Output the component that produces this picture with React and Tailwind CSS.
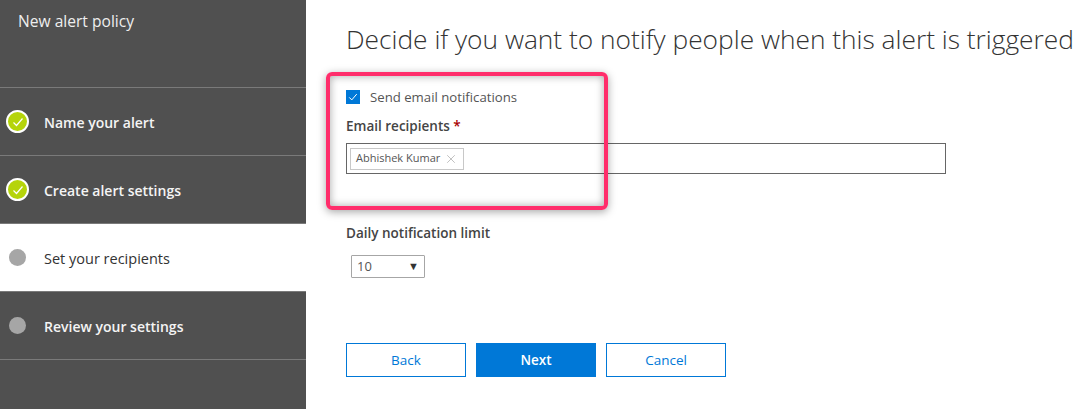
import { X } from 'lucide-react'

const pasos = [
  { nome: 'Name your alert', estado: 'feito' },
  { nome: 'Create alert settings', estado: 'feito' },
  { nome: 'Set your recipients', estado: 'atual' },
  { nome: 'Review your settings', estado: 'pendente' },
]

function Visto({ size = 10, className = '' }) {
  return (
    <svg width={size} height={size} viewBox="0 0 12 12" fill="none" className={className}>
      <path d="M1.5 6.5 L4.5 9.5 L10.5 2.5" stroke="currentColor" strokeWidth="1.2" />
    </svg>
  )
}

function Passo({ nome, estado }) {
  const atual = estado === 'atual'
  return (
    <div className={`flex h-[68px] items-center border-b border-[#7a7a7a] ${atual ? 'bg-white' : ''}`}>
      <div className="flex w-[44px] shrink-0 justify-center pr-[9px]">
        {estado === 'feito' ? (
          <div className="flex h-[23px] w-[23px] items-center justify-center rounded-full border-2 border-white bg-[#b5d40a] text-white">
            <Visto size={12} />
          </div>
        ) : (
          <div className="h-[17px] w-[17px] rounded-full bg-[#a6a6a6]" />
        )}
      </div>
      <span className={`pt-[2px] ${atual ? 'text-[14.5px] text-[#333333]' : 'text-[14px] font-semibold text-[#f4f4f4]'}`}>
        {nome}
      </span>
    </div>
  )
}

function Botao({ children, primario }) {
  return (
    <button
      className={`h-[34px] w-[120px] border border-[#0078d7] text-[13.5px] ${
        primario ? 'bg-[#0078d7] font-semibold text-white' : 'bg-white text-[#0078d7]'
      }`}
    >
      {children}
    </button>
  )
}

export default function App() {
  return (
    <div className="flex h-[409px] w-[1092px] overflow-hidden bg-white font-['Open_Sans','Noto_Sans',sans-serif]">
      <aside className="flex w-[306px] shrink-0 flex-col bg-[#505050]">
        <div className="h-[88px] border-b border-[#7a7a7a] pt-[10px] pl-[18px] text-[15.6px] text-[#eeeeee]">
          New alert policy
        </div>
        {pasos.map((p) => (
          <Passo key={p.nome} {...p} />
        ))}
      </aside>

      <main className="relative flex-1 pl-[40px]">
        <h1 className="mt-[22px] text-[26.3px] leading-[34px] font-light whitespace-nowrap text-[#333333]">
          Decide if you want to notify people when this alert is triggered
        </h1>

        <label className="mt-[33px] flex h-[16px] items-center gap-[10px] text-[13.2px] text-[#555555]">
          <span className="flex h-[14px] w-[14px] items-center justify-center bg-[#0078d7] text-white">
            <Visto size={10} />
          </span>
          <span className="pt-[2px]">Send email notifications</span>
        </label>

        <div className="mt-[11px] text-[13.5px] leading-[20px] font-semibold text-[#444444]">
          Email recipients <span className="text-[#a80000]">*</span>
        </div>

        <div className="mt-[7px] flex h-[31px] w-[600px] items-center border border-[#666666] pl-[3px]">
          <span className="flex h-[22px] items-center gap-[4px] border border-[#c8c8c8] pr-[5px] pl-[5px] text-[11px] text-[#555555]">
            Abhishek Kumar
            <X size={14} strokeWidth={1.2} className="text-[#a6a6a6]" />
          </span>
        </div>

        <div className="mt-[49px] text-[13.5px] leading-[20px] font-semibold text-[#444444]">
          Daily notification limit
        </div>

        <div className="mt-[12px] ml-[5px] flex h-[23px] w-[74px] items-center justify-between rounded-[1px] border border-[#a6a6a6] pr-[5px] pl-[5px] text-[13px] text-[#555555]">
          10
          <span className="text-[11px] text-[#333333]">▼</span>
        </div>

        <div className="mt-[65px] flex gap-[10px]">
          <Botao>Back</Botao>
          <Botao primario>Next</Botao>
          <Botao>Cancel</Botao>
        </div>

        <div className="pointer-events-none absolute top-[72px] left-[20px] h-[138px] w-[282px] rounded-[6px] border-4 border-[#ff2d6b] shadow-[0_2px_8px_rgba(0,0,0,0.35),inset_0_0_8px_rgba(0,0,0,0.35)]" />
      </main>
    </div>
  )
}
